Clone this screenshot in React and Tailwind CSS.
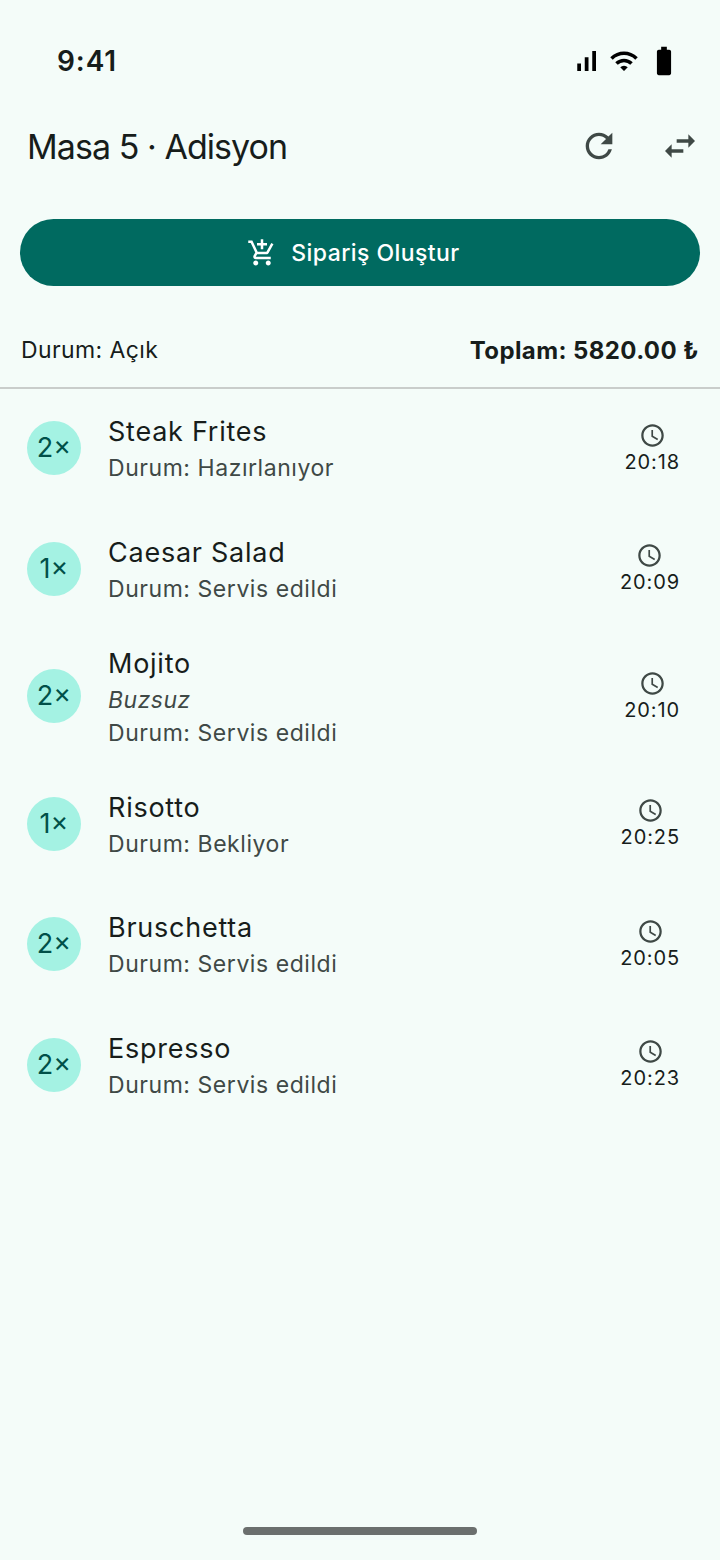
import React from 'react';
import {
  MdRefresh,
  MdSwapHoriz,
  MdOutlineAddShoppingCart,
  MdOutlineSchedule,
  MdBatteryFull,
  MdWifi,
  MdSignalCellularAlt,
} from 'react-icons/md';

const items = [
  { qty: 2, name: 'Steak Frites', status: 'Hazırlanıyor', time: '20:18' },
  { qty: 1, name: 'Caesar Salad', status: 'Servis edildi', time: '20:09' },
  { qty: 2, name: 'Mojito', note: 'Buzsuz', status: 'Servis edildi', time: '20:10' },
  { qty: 1, name: 'Risotto', status: 'Bekliyor', time: '20:25' },
  { qty: 2, name: 'Bruschetta', status: 'Servis edildi', time: '20:05' },
  { qty: 2, name: 'Espresso', status: 'Servis edildi', time: '20:23' },
];

function OrderRow({ item }) {
  return (
    <div className={`flex items-center pl-[27px] pr-[40px] ${item.note ? 'h-[134.5px]' : 'h-[120.5px]'}`}>
      <div className="w-[54px] h-[54px] rounded-full bg-[#a4f2e3] flex items-center justify-center text-[#005048] text-[27px] shrink-0">
        {item.qty}×
      </div>
      <div className="ml-[27px] flex-1 pt-[4px]">
        <div className="text-[27px] leading-[36px] tracking-[0.75px] text-[#171d1b]">{item.name}</div>
        {item.note && (
          <div className="mt-[2px] -mb-[2px] text-[23px] leading-[33px] tracking-[0.5px] italic text-[#3f4946]">{item.note}</div>
        )}
        <div className="text-[23px] leading-[36px] tracking-[0.55px] text-[#3f4946]">Durum: {item.status}</div>
      </div>
      <div className="flex flex-col items-center">
        <MdOutlineSchedule className="text-[27px] text-[#3f4946]" />
        <div className="text-[20px] leading-[26px] tracking-[0.9px] text-[#171d1b]">{item.time}</div>
      </div>
    </div>
  );
}

export default function App() {
  return (
    <div className="w-[720px] h-[1560px] bg-[#f4fcf9] flex flex-col font-['Inter',sans-serif] overflow-hidden">
      <div className="h-[96px] pt-[40px] pl-[57px] pr-[39px] flex items-start justify-between">
        <div className="text-[28px] leading-[42px] font-semibold tracking-[0.9px] text-[#171d1b]">9:41</div>
        <div className="flex items-center text-black pt-[4px]">
          <MdSignalCellularAlt className="text-[30px]" />
          <MdWifi className="text-[30px] ml-[8px]" />
          <MdBatteryFull className="text-[34px] ml-[8px]" />
        </div>
      </div>

      <div className="h-[100px] pl-[27px] pr-[20px] flex items-center justify-between">
        <h1 className="pt-[1px] text-[34px] leading-[42px] tracking-[-0.95px] text-[#171d1b]">Masa 5 · Adisyon</h1>
        <div className="flex items-center gap-[41px] text-[#3f4946]">
          <MdRefresh className="text-[40px]" />
          <MdSwapHoriz className="text-[40px]" />
        </div>
      </div>

      <div className="mt-[23px] mx-[20px] h-[67px] rounded-full bg-[#006a60] flex items-center justify-center pt-[1px] pr-[13px] text-white">
        <MdOutlineAddShoppingCart className="text-[30px]" />
        <span className="ml-[14px] text-[23px] tracking-[0.43px] font-medium">Sipariş Oluştur</span>
      </div>

      <div className="h-[101px] pt-[28px] px-[21px] flex items-center justify-between text-[#171d1b]">
        <span className="text-[23px] tracking-[0.4px]">Durum: Açık</span>
        <span className="text-[24px] tracking-[0.4px] font-bold">Toplam: 5820.00 ₺</span>
      </div>
      <div className="h-[2px] bg-[#c9cdcb]" />

      <div className="-mt-[1px]">
        {items.map((item) => (
          <OrderRow key={item.name} item={item} />
        ))}
      </div>

      <div className="mt-auto mb-[25px] mx-auto w-[234px] h-[8px] rounded-full bg-[#6b6f6e]" />
    </div>
  );
}
